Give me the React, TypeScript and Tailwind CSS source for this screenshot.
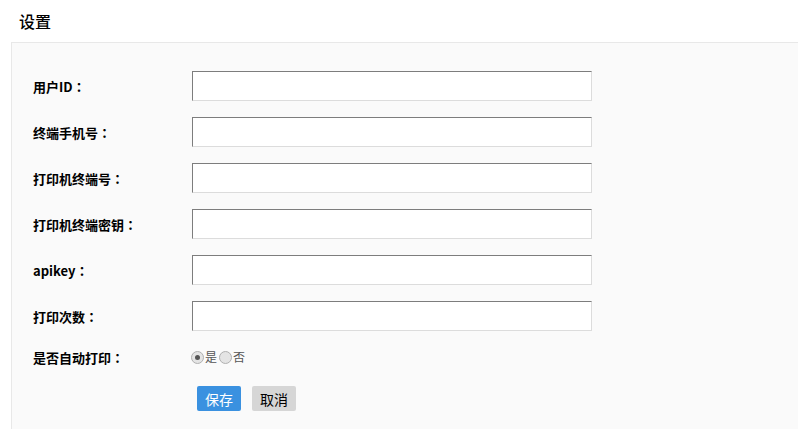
import React from "react";

const labels = ["用户ID", "终端手机号", "打印机终端号", "打印机终端密钥", "apikey", "打印次数"];

function Colon() {
  return (
    <span style={{ fontFamily: '"Noto Sans CJK TC", sans-serif' }}>：</span>
  );
}

function Radio({ checked }: { checked?: boolean }) {
  return (
    <span className="relative inline-flex h-[13px] w-[13px] items-center justify-center rounded-full border border-[#b0b0b0] bg-[#e4e4e4]">
      {checked && <span className="h-[5px] w-[5px] rounded-full bg-[#555]" />}
    </span>
  );
}

export default function App() {
  return (
    <div
      className="h-[429px] w-[798px] overflow-hidden bg-white text-black"
      style={{ fontFamily: '"Noto Sans CJK SC", "Liberation Sans", sans-serif' }}
    >
      <div className="flex h-[42px] items-center pl-[19px] text-[16px] font-medium leading-none">设置</div>
      <div className="ml-[11px] h-[387px] border-l border-t border-[#e8e8e8] bg-[#fafafa] pl-[21px] pt-[28px]">
        <div className="flex flex-col gap-[16px]">
          {labels.map((l) => (
            <div key={l} className="flex h-[30px] items-center">
              <div className="w-[159px] text-[13px] font-bold leading-none">
                {l}
                <Colon />
              </div>
              <div className="h-[30px] w-[400px] border border-b-[#dcdcdc] border-l-[#7d7d7d] border-r-[#dcdcdc] border-t-[#7d7d7d] bg-white" />
            </div>
          ))}
        </div>
        <div className="mt-[17px] flex h-[18px] items-center">
          <div className="w-[158px] text-[13px] font-bold leading-none">
            是否自动打印
            <Colon />
          </div>
          <div className="flex items-center text-[12px] leading-none text-[#555]">
            <Radio checked />
            <span className="ml-[1px]">是</span>
            <span className="ml-[2px]" />
            <Radio />
            <span className="ml-[1px]">否</span>
          </div>
        </div>
        <div className="ml-[164px] mt-[20px] flex gap-[11px]">
          <button className="flex h-[25px] w-[44px] items-center justify-center rounded-[2px] bg-[#3a91e0] text-[14px] leading-none text-white">
            保存
          </button>
          <button className="flex h-[25px] w-[44px] items-center justify-center rounded-[2px] bg-[#d6d6d6] text-[14px] leading-none text-black">
            取消
          </button>
        </div>
      </div>
    </div>
  );
}
